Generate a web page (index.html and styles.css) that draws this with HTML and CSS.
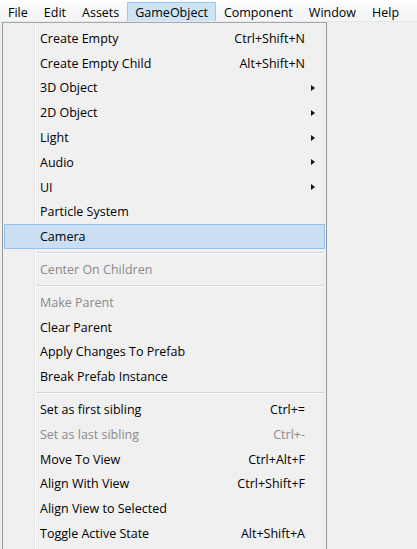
FILE: index.html
```html
<!DOCTYPE html>
<html lang="en">
<head>
    <meta charset="UTF-8">
    <meta name="viewport" content="width=device-width, initial-scale=1.0">
    <title>GameObject Menu</title>
    <link rel="stylesheet" href="styles.css">
</head>
<body>
    <div class="menubar">
        <span class="menu-title">File</span>
        <span class="menu-title">Edit</span>
        <span class="menu-title">Assets</span>
        <span class="menu-title open">GameObject</span>
        <span class="menu-title">Component</span>
        <span class="menu-title">Window</span>
        <span class="menu-title">Help</span>
    </div>

    <div class="dropdown">
        <div class="item"><span class="label">Create Empty</span><span class="shortcut">Ctrl+Shift+N</span></div>
        <div class="item"><span class="label">Create Empty Child</span><span class="shortcut">Alt+Shift+N</span></div>
        <div class="item submenu"><span class="label">3D Object</span><span class="arrow"></span></div>
        <div class="item submenu"><span class="label">2D Object</span><span class="arrow"></span></div>
        <div class="item submenu"><span class="label">Light</span><span class="arrow"></span></div>
        <div class="item submenu"><span class="label">Audio</span><span class="arrow"></span></div>
        <div class="item submenu"><span class="label">UI</span><span class="arrow"></span></div>
        <div class="item"><span class="label">Particle System</span></div>
        <div class="item hover"><span class="label">Camera</span></div>
        <div class="separator"></div>
        <div class="item disabled"><span class="label">Center On Children</span></div>
        <div class="separator"></div>
        <div class="item disabled"><span class="label">Make Parent</span></div>
        <div class="item"><span class="label">Clear Parent</span></div>
        <div class="item"><span class="label">Apply Changes To Prefab</span></div>
        <div class="item"><span class="label">Break Prefab Instance</span></div>
        <div class="separator"></div>
        <div class="item"><span class="label">Set as first sibling</span><span class="shortcut">Ctrl+=</span></div>
        <div class="item disabled"><span class="label">Set as last sibling</span><span class="shortcut">Ctrl+-</span></div>
        <div class="item"><span class="label">Move To View</span><span class="shortcut">Ctrl+Alt+F</span></div>
        <div class="item"><span class="label">Align With View</span><span class="shortcut">Ctrl+Shift+F</span></div>
        <div class="item"><span class="label">Align View to Selected</span></div>
        <div class="item"><span class="label">Toggle Active State</span><span class="shortcut">Alt+Shift+A</span></div>
    </div>
</body>
</html>
```

FILE: styles.css
```css
body {
    margin: 0;
    background-color: #f0f0f0;
    font-family: 'Segoe UI', 'Open Sans', 'Noto Sans', sans-serif;
    font-size: 12.5px;
    color: #000;
}
.menubar {
    display: flex;
    height: 22px;
    background: linear-gradient(#fcfcfd, #f3f4f6);
    border-bottom: 1px solid #e6e8eb;
    box-sizing: border-box;
}
.menu-title {
    display: flex;
    align-items: center;
    padding: 0 7px;
    margin-top: 2px;
    border: 1px solid transparent;
    border-bottom: none;
}
.menu-title.open {
    background-color: #cde4f7;
    border-color: #99c8ee;
}
.dropdown {
    width: 325px;
    margin-left: 2px;
    padding: 3px 1px;
    border: 1px solid #979797;
    border-top-color: #a8a8a8;
    background-color: #f0f0f0;
    background-image: linear-gradient(to right, transparent 31px, #e2e3e3 31px, #e2e3e3 32px, #fdfdfd 32px, #fdfdfd 33px, transparent 33px);
    box-sizing: border-box;
}
.item {
    display: flex;
    align-items: center;
    height: 24.8px;
    padding: 0 9px 0 35px;
    border: 1px solid transparent;
    box-sizing: border-box;
}
.item .label {
    flex: 1;
}
.item .shortcut {
    padding-right: 10px;
}
.item.hover {
    background-color: rgba(196, 220, 244, 0.85);
    border-color: #94c0ea;
}
.item.disabled {
    color: #8a8a8a;
}
.arrow {
    width: 0;
    height: 0;
    border-top: 3.5px solid transparent;
    border-bottom: 3.5px solid transparent;
    border-left: 4px solid #111;
}
.separator {
    height: 8px;
    margin-left: 33px;
    margin-right: 1px;
    background: linear-gradient(transparent 3px, #d7d7d7 3px, #d7d7d7 4px, #fcfcfc 4px, #fcfcfc 5px, transparent 5px);
}
```
